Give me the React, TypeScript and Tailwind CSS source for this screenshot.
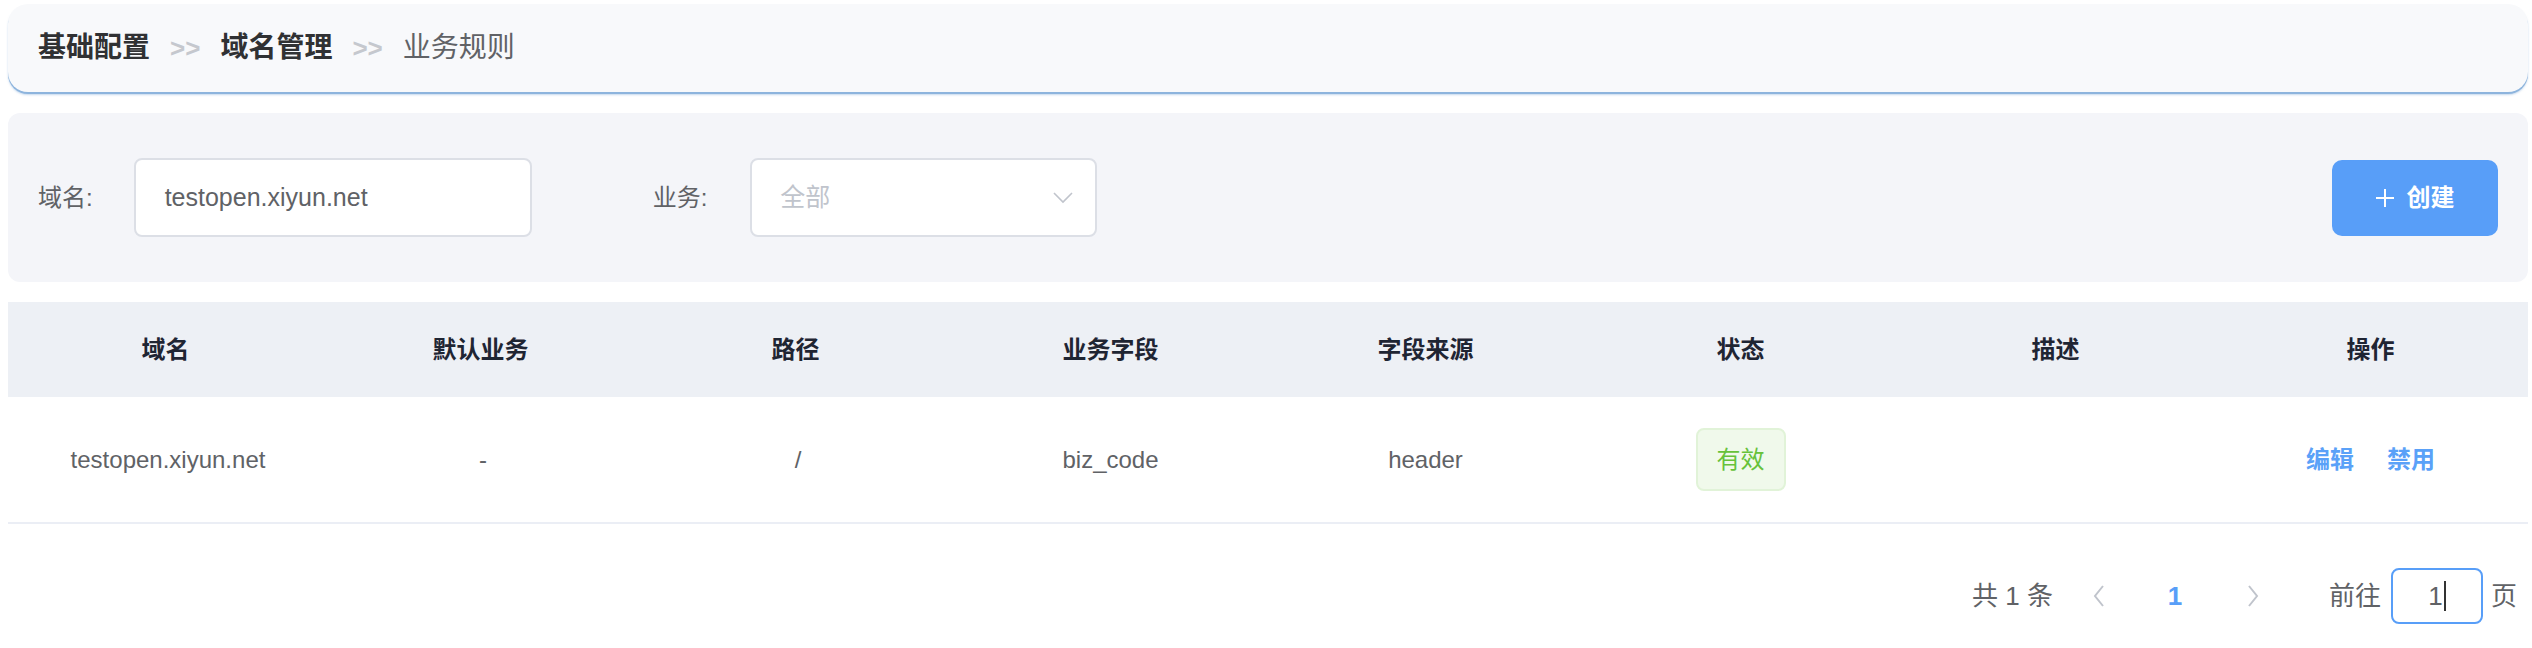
import React from 'react';

const columns = ['域名', '默认业务', '路径', '业务字段', '字段来源', '状态', '描述', '操作'];

const ChevronDown = () => (
  <svg width="20" height="12" viewBox="0 0 20 12" fill="none">
    <polyline points="1,1 10,10 19,1" stroke="#c0c4cc" strokeWidth="1.6" />
  </svg>
);

const Arrow = ({ dir }: { dir: 'left' | 'right' }) => (
  <svg width="12" height="22" viewBox="0 0 12 22" fill="none">
    {dir === 'left' ? (
      <polyline points="10,1 2,11 10,21" stroke="#c0c4cc" strokeWidth="2" />
    ) : (
      <polyline points="2,1 10,11 2,21" stroke="#c0c4cc" strokeWidth="2" />
    )}
  </svg>
);

const App: React.FC = () => {
  return (
    <div className="min-h-[648px] bg-white pl-2 pr-1 pt-1 font-['Liberation_Sans','Noto_Sans_CJK_SC',sans-serif]">
      {/* breadcrumb */}
      <div className="flex h-[88px] items-center gap-5 rounded-[20px] bg-[#f8f9fb] pl-[30px] shadow-[0_2px_0_#8db4dd,0_3px_2px_rgba(141,180,221,0.5)]">
        <span className="text-[28px] font-bold leading-none text-[#303133]">基础配置</span>
        <span className="text-[26px] font-bold leading-none text-[#c5c8ce]">&gt;&gt;</span>
        <span className="text-[28px] font-bold leading-none text-[#303133]">域名管理</span>
        <span className="text-[26px] font-bold leading-none text-[#c5c8ce]">&gt;&gt;</span>
        <span className="text-[28px] leading-none text-[#606266]">业务规则</span>
      </div>

      {/* filters */}
      <div className="mt-[21px] flex h-[169px] items-center rounded-[12px] bg-[#f4f5f9] pl-[30px] pr-[30px]">
        <span className="text-[24px] text-[#606266]">域名:</span>
        <div className="ml-[41px] flex h-[79px] w-[398px] items-center rounded-[8px] border-2 border-[#dcdfe6] bg-white pl-[29px]">
          <span className="text-[25px] text-[#606266]">testopen.xiyun.net</span>
        </div>
        <span className="ml-[121px] text-[24px] text-[#606266]">业务:</span>
        <div className="ml-[43px] flex h-[79px] w-[347px] items-center justify-between rounded-[8px] border-2 border-[#dcdfe6] bg-white pl-[28px] pr-[22px]">
          <span className="text-[25px] text-[#c0c4cc]">全部</span>
          <ChevronDown />
        </div>
        <button className="ml-auto flex h-[76px] w-[166px] items-center justify-center gap-[13px] rounded-[10px] bg-[#589ef8] text-white">
          <svg width="18" height="18" viewBox="0 0 18 18">
            <line x1="9" y1="0" x2="9" y2="18" stroke="white" strokeWidth="2" />
            <line x1="0" y1="9" x2="18" y2="9" stroke="white" strokeWidth="2" />
          </svg>
          <span className="text-[24px] font-bold">创建</span>
        </button>
      </div>

      {/* table */}
      <div className="mt-5">
        <div className="grid h-[95px] grid-cols-8 items-center bg-[#edf0f5]">
          {columns.map(c => (
            <div key={c} className="text-center text-[24px] font-bold text-[#1f2533]">
              {c}
            </div>
          ))}
        </div>
        <div className="grid h-[127px] grid-cols-8 items-center border-b-2 border-[#ebeef5] text-center text-[24px] text-[#606266]">
          <div className="pl-[5px]">testopen.xiyun.net</div>
          <div className="pl-[5px]">-</div>
          <div className="pl-[5px]">/</div>
          <div>biz_code</div>
          <div>header</div>
          <div className="flex justify-center">
            <span className="flex h-[63px] w-[90px] items-center justify-center rounded-[8px] border-2 border-[#e1f3d8] bg-[#f0f9eb] text-[24px] text-[#67c23a]">
              有效
            </span>
          </div>
          <div></div>
          <div className="flex justify-center gap-[33px] font-bold text-[#5aa1f8]">
            <span>编辑</span>
            <span>禁用</span>
          </div>
        </div>
      </div>

      {/* pagination */}
      <div className="mt-[44px] flex items-center justify-end pr-[11px] text-[26px] text-[#606266]">
        <span>共 1 条</span>
        <span className="ml-[16px] flex w-[60px] justify-center">
          <Arrow dir="left" />
        </span>
        <span className="ml-[16px] w-[60px] text-center font-bold text-[#589ef8]">1</span>
        <span className="ml-[18px] flex w-[60px] justify-center">
          <Arrow dir="right" />
        </span>
        <span className="ml-[46px]">前往</span>
        <div className="ml-[10px] flex h-[56px] w-[92px] items-center justify-center rounded-[8px] border-2 border-[#589ef8]">
          <span>1</span>
          <span className="ml-[1px] h-[30px] w-[2px] bg-[#333]"></span>
        </div>
        <span className="ml-[8px]">页</span>
      </div>
    </div>
  );
};

export default App;
